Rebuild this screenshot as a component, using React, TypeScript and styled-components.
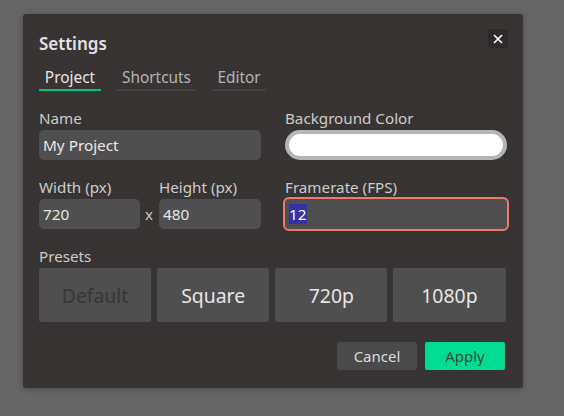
import React, { useEffect, useRef } from "react";
import styled, { createGlobalStyle } from "styled-components";

const GlobalStyle = createGlobalStyle`
  html, body {
    margin: 0;
    height: 100%;
    background: #666666;
    overflow: hidden;
  }
  * {
    box-sizing: border-box;
  }
`;

const Page = styled.div`
  width: 564px;
  height: 416px;
  padding: 14px 0 0 23px;
  font-family: "Noto Sans", "Open Sans", sans-serif;
`;
const Dialog = styled.div`
  width: 500px;
  height: 374px;
  padding: 15px 16px 0;
  background: #383433;
  border-radius: 3px;
  box-shadow: 0 1px 6px rgba(0, 0, 0, 0.3);
`;
const Header = styled.div`
  display: flex;
  justify-content: space-between;
  height: 37px;
`;
const Heading = styled.div`
  margin-top: 3px;
  font-size: 17px;
  line-height: 24px;
  font-weight: 600;
  color: #e2e2e2;
`;
const CloseButton = styled.button`
  display: flex;
  align-items: center;
  justify-content: center;
  width: 20px;
  height: 19px;
  margin-right: -1px;
  padding: 0;
  border: none;
  border-radius: 2px;
  background: #2d2b2a;
  color: #ffffff;
`;
const Tabs = styled.div`
  display: flex;
  gap: 15px;
`;
const Tab = styled.div<{ $active?: boolean; $width: number }>`
  width: ${(p) => p.$width}px;
  height: 25px;
  text-align: center;
  font-size: 15.4px;
  line-height: 23px;
  white-space: nowrap;
  color: ${(p) => (p.$active ? "#e6e6e6" : "#b4b4b4")};
  border-bottom: 2px solid ${(p) => (p.$active ? "#00c780" : "#454342")};
`;
const FormGrid = styled.div`
  display: grid;
  grid-template-columns: 222px 222px;
  column-gap: 24px;
  row-gap: 15px;
  margin-top: 15px;
`;
const Field = styled.div`
  display: flex;
  flex-direction: column;
  min-width: 0;
`;
const Label = styled.label`
  height: 24px;
  font-size: 15.2px;
  line-height: 24px;
  white-space: nowrap;
  color: #cccccc;
`;
const TextInput = styled.input`
  width: 100%;
  height: 30px;
  padding: 0 4px;
  border: none;
  border-radius: 5px;
  outline: none;
  background: #4f4f4f;
  font-family: inherit;
  font-size: 15.3px;
  color: #e8e8e8;
`;
const FocusedInput = styled(TextInput)`
  width: 226px;
  height: 34px;
  margin: -2px -2px;
  padding: 0 4px;
  border: 2px solid #f07b68;
  border-radius: 6px;
  &::selection {
    background: #3232a8;
    color: #ffffff;
  }
`;
const ColorSwatch = styled.div`
  height: 30px;
  border: 4px solid #b5b5b5;
  border-radius: 15px;
  background: #ffffff;
`;
const SizeRow = styled.div`
  display: grid;
  grid-template-columns: 101px 102px;
  column-gap: 19px;
`;
const Times = styled.span`
  position: absolute;
  font-size: 15px;
`;
const SizeCell = styled.div`
  position: relative;
  display: flex;
  flex-direction: column;
  ${Times} {
    left: 106px;
    bottom: 5px;
    color: #cccccc;
  }
`;
const PresetsLabel = styled(Label)`
  display: block;
  margin-top: 15px;
`;
const PresetRow = styled.div`
  display: grid;
  grid-template-columns: repeat(4, 1fr);
  column-gap: 6px;
  width: 466.5px;
`;
const PresetButton = styled.button<{ $disabled?: boolean }>`
  height: 54px;
  padding: 0;
  border: none;
  border-radius: 2px;
  background: #4f4f4f;
  font-family: inherit;
  font-size: 19.4px;
  color: ${(p) => (p.$disabled ? "#383636" : "#e6e6e6")};
`;
const Footer = styled.div`
  display: flex;
  justify-content: flex-end;
  gap: 8px;
  margin: 20px 2px 0 0;
`;
const ActionButton = styled.button<{ $primary?: boolean }>`
  width: 80px;
  height: 28px;
  padding: 0;
  border: none;
  border-radius: 2px;
  background: ${(p) => (p.$primary ? "#00dd92" : "#4a4a4a")};
  font-family: inherit;
  font-size: 15px;
  color: ${(p) => (p.$primary ? "#3a4a45" : "#dddddd")};
`;

const presets = ["Default", "Square", "720p", "1080p"];

export default function App() {
  const fpsRef = useRef<HTMLInputElement>(null);

  useEffect(() => {
    fpsRef.current?.focus();
    fpsRef.current?.select();
  }, []);

  return (
    <Page>
      <GlobalStyle />
      <Dialog>
        <Header>
          <Heading>Settings</Heading>
          <CloseButton aria-label="Close">
            <svg width="10" height="10" viewBox="0 0 10 10">
              <path d="M1 1 L9 9 M9 1 L1 9" stroke="currentColor" strokeWidth="1.7" />
            </svg>
          </CloseButton>
        </Header>
        <Tabs>
          <Tab $active $width={62}>Project</Tab>
          <Tab $width={81}>Shortcuts</Tab>
          <Tab $width={54}>Editor</Tab>
        </Tabs>
        <FormGrid>
          <Field>
            <Label>Name</Label>
            <TextInput defaultValue="My Project" />
          </Field>
          <Field>
            <Label>Background Color</Label>
            <ColorSwatch />
          </Field>
          <SizeRow>
            <SizeCell>
              <Label>Width (px)</Label>
              <TextInput defaultValue="720" />
              <Times>x</Times>
            </SizeCell>
            <SizeCell>
              <Label>Height (px)</Label>
              <TextInput defaultValue="480" />
            </SizeCell>
          </SizeRow>
          <Field>
            <Label>Framerate (FPS)</Label>
            <FocusedInput ref={fpsRef} defaultValue="12" />
          </Field>
        </FormGrid>
        <PresetsLabel>Presets</PresetsLabel>
        <PresetRow>
          {presets.map((name) => (
            <PresetButton key={name} $disabled={name === "Default"}>
              {name}
            </PresetButton>
          ))}
        </PresetRow>
        <Footer>
          <ActionButton>Cancel</ActionButton>
          <ActionButton $primary>Apply</ActionButton>
        </Footer>
      </Dialog>
    </Page>
  );
}
